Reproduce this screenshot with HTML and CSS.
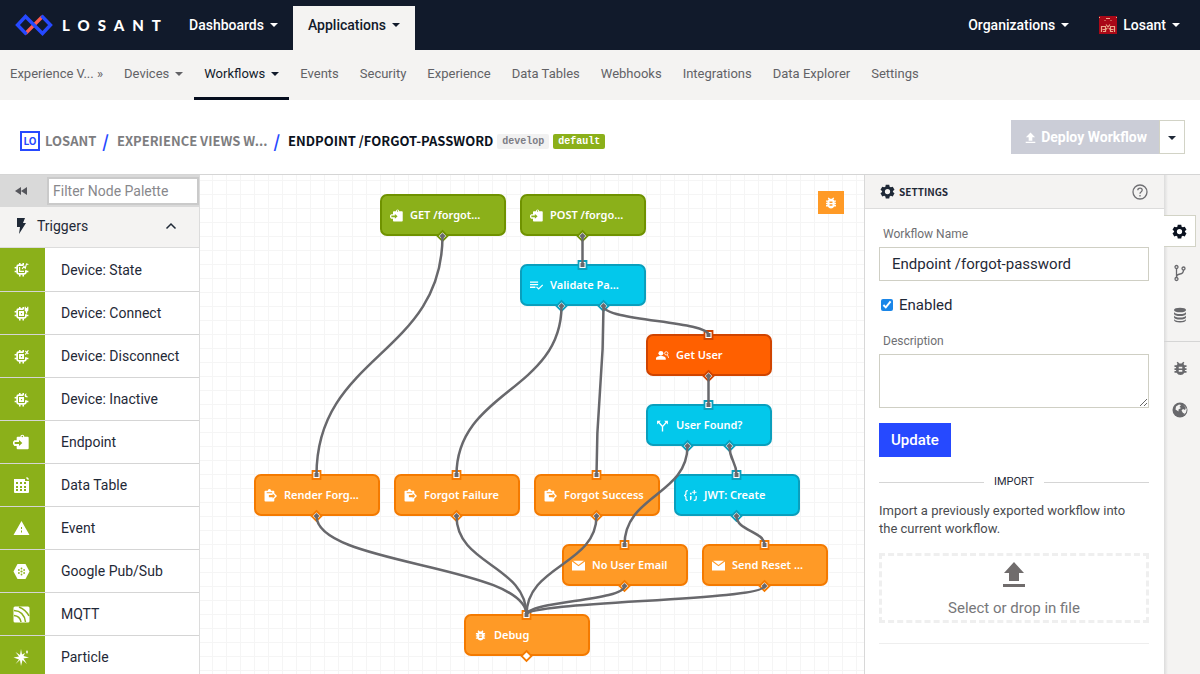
FILE: index.html
```html
<!DOCTYPE html>
<html lang="en">
<head>
<meta charset="utf-8">
<title>Endpoint /forgot-password | Losant</title>
<meta name="viewport" content="width=device-width, initial-scale=1">
<link rel="stylesheet" href="styles.css">
</head>
<body>
<svg class="defs" width="0" height="0" aria-hidden="true">
  <symbol id="gear" viewBox="0 0 24 24"><path fill-rule="evenodd" d="M9.2 1h5.6l.6 3.2 1.9 1.1 3.1-1.1 2.8 4.9-2.5 2.1v1.6l2.5 2.1-2.8 4.9-3.1-1.1-1.9 1.1-.6 3.2H9.2l-.6-3.2-1.9-1.1-3.1 1.1L.8 14.900l2.500-2.100v-1.600L.8 9.100l2.800-4.900 3.100 1.100 1.900-1.100zM12 7.800a4.200 4.200 0 1 0 0 8.400 4.200 4.200 0 0 0 0-8.400z"/></symbol>
  <symbol id="bug" viewBox="0 0 24 24"><path fill-rule="evenodd" d="M20.500 7.500h-3A6 6 0 0 0 16 5.800L17.500 4 16 2.500l-2.500 2.300h-3L8 2.500 6.500 4 8 5.800a6 6 0 0 0-1.500 1.700h-3V10h2.300v1.500H3.500V14h2.300v1.500H3.500V18h3a6.300 6.300 0 0 0 11 0h3v-2.500h-2.300V14h2.300v-2.500h-2.300V10h2.300zM14.500 16.500h-5V14h5zm0-4.500h-5V9.500h5z"/></symbol>
  <symbol id="mail" viewBox="0 0 24 24"><path d="M2 3h20l-10 8z M0 4.500l12 9 12-9V21H0z"/></symbol>
  <symbol id="endpoint" viewBox="0 0 24 24"><path fill-rule="evenodd" d="M7 4h4a3 3 0 0 1 6 0h5q1.500 0 1.500 1.500v16Q23.500 23 22 23H7q-1.500 0-1.500-1.500V18H2L0 15v-3l2-2.500h3.500v-4Q5.500 4 7 4zM14 2.500a1.200 1.200 0 1 0 0 2.400 1.200 1.200 0 0 0 0-2.400zM2.500 12v3H9v3l5-4.500L9 9v3z"/></symbol>
  <symbol id="reply" viewBox="0 0 24 24"><path fill-rule="evenodd" d="M2.500 3H7a3 3 0 0 1 6 0h4.500Q19 3 19 4.500V8l5 5-5 5v3.500q0 1.500-1.500 1.500h-15Q1 23 1 21.500v-17Q1 3 2.500 3zM5 6v2h10V6zM16 8.500V11H9v4h7v2.500l4.500-4.500z"/></symbol>
  <symbol id="upload" viewBox="0 0 24 24"><path d="M12 1 22 11.500h-6V19H8v-7.500H2zM1.500 21.500h21V24h-21z"/></symbol>
  <symbol id="validate" viewBox="0 0 24 24"><path d="M0 4.500h15V7H0zm0 4.800h15v2.400H0zM0 14h10v2.400H0z"/><path d="m12 14.500 4 4L23.500 11" fill="none" stroke="currentColor" stroke-width="2.200"/></symbol>
  <symbol id="user" viewBox="0 0 24 24"><circle cx="9" cy="8" r="4.500"/><path d="M0 20v-2.500C0 14 6 13 9 13s9 1 9 4.500V20z"/><circle cx="19" cy="8" r="3" fill="none" stroke="currentColor" stroke-width="1.500"/><path d="m21 10.500 2.500 6" stroke="currentColor" stroke-width="1.500"/></symbol>
  <symbol id="split" viewBox="0 0 24 24"><path d="M12 23v-9L4.500 5.500M12 14l7.500-8.500" fill="none" stroke="currentColor" stroke-width="2.500"/><path d="M2 3h7L2 10zM22 3h-7l7 7z"/></symbol>
  <symbol id="jwt" viewBox="0 0 24 24"><path d="M7 3H6Q3.500 3 3.500 6v3.500L1 12l2.500 2.500V18q0 3 2.500 3h1M22.500 13v5q0 3-3 3H18" fill="none" stroke="currentColor" stroke-width="2.200"/><path d="M11 7h3v3h-3zM11 13h3v6l-3 2zM18 2h2v3h3v2h-3v3h-2V7h-3V5h3z"/></symbol>
  <symbol id="chip" viewBox="0 0 24 24"><path d="M15 5H7.500Q5 5 5 7.500v9Q5 19 7.500 19h9q2.500 0 2.500-2.500V13" fill="none" stroke="currentColor" stroke-width="2.800"/><path d="M8 1.500h2.500V5H8zM13.500 1.500H16V5h-2.500zM8 19.500h2.500V23H8zM13.500 19.500H16V23h-2.500zM1 8h3.500v2.500H1zM1 14h3.500v2.500H1zM19 14h4v2.500h-4z"/></symbol>
  <symbol id="core" viewBox="0 0 24 24"><path fill-rule="evenodd" d="M8 8h8v8H8zm3 3v2h2v-2z"/></symbol>
</svg>

<header class="topbar">
  <a class="brand" href="#" aria-label="Losant">
    <svg width="38" height="22" viewBox="0 0 38 22" fill="none" stroke-width="3.400"><path stroke="#ff5a4e" d="m10.500 19.500 17-17"/><path stroke="#2649ff" d="m11.500 20.300-9-9.300 8-8.500 17 17 8-8.500-9-9.300"/></svg>
    <span class="wordmark">LOSANT</span>
  </a>
  <nav class="main-nav">
    <a class="main-link" href="#">Dashboards<i class="caret"></i></a>
    <a class="main-link main-link-active" href="#">Applications<i class="caret"></i></a>
  </nav>
  <nav class="account-nav">
    <a class="main-link" href="#">Organizations<i class="caret"></i></a>
    <a class="main-link account" href="#">
      <svg width="18" height="18" viewBox="0 0 18 18"><path fill="#a90817" d="M0 0h18v18H0z"/><path d="M0 1.500h1M17 1.500h1M7 2.500h4M5.500 4.500h1m5 0h1M2.500 16v-5.500h4v3h-3M6.500 13.500v2H4M15.500 16v-5.500h-4v3h3M11.500 13.500v2H14M7 8.500l4 5M11 8.500l-4 5" fill="none" stroke="#eaa98a" stroke-width="1.200"/></svg>
      Losant<i class="caret"></i></a>
  </nav>
</header>

<nav class="subnav">
  <a class="sub-link" href="#">Experience V... »</a>
  <a class="sub-link" href="#">Devices<i class="caret"></i></a>
  <a class="sub-link sub-link-active" href="#">Workflows<i class="caret"></i></a>
  <a class="sub-link" href="#">Events</a>
  <a class="sub-link" href="#">Security</a>
  <a class="sub-link" href="#">Experience</a>
  <a class="sub-link" href="#">Data Tables</a>
  <a class="sub-link" href="#">Webhooks</a>
  <a class="sub-link" href="#">Integrations</a>
  <a class="sub-link" href="#">Data Explorer</a>
  <a class="sub-link" href="#">Settings</a>
</nav>

<div class="titlebar">
  <div class="crumbs">
    <span class="org-badge">LO</span>
    <a class="crumb" href="#">LOSANT</a><span class="slash">/</span>
    <a class="crumb" href="#">EXPERIENCE VIEWS W...</a><span class="slash">/</span>
    <h1 class="crumb-current">ENDPOINT /FORGOT-PASSWORD</h1>
    <span class="tag">develop</span><span class="tag tag-default">default</span>
  </div>
  <div class="deploy">
    <button class="deploy-main" type="button" disabled><svg width="11" height="11"><use href="#upload"/></svg>Deploy Workflow</button>
    <button class="deploy-more" type="button" aria-label="Deploy options"><i class="caret"></i></button>
  </div>
</div>

<main class="workspace">
  <aside class="palette">
    <div class="palette-filter">
      <button class="collapse" type="button" aria-label="Collapse palette"><svg width="14" height="10" viewBox="0 0 14 10"><path d="M7 1v8L1 5zM13 1v8L7 5z"/></svg></button>
      <input class="filter-input" type="text" placeholder="Filter Node Palette" aria-label="Filter Node Palette">
    </div>
    <button class="group" type="button">
      <svg width="12" height="16" viewBox="0 0 12 16"><path d="M2 0h8L8 5h3L4 16l1-7H2z"/></svg>Triggers
      <svg class="chevron" width="12" height="8" viewBox="0 0 12 8"><path d="m1.500 6.500 4.500-4.500 4.500 4.500" fill="none" stroke="currentColor" stroke-width="1.500"/></svg>
    </button>
    <ul class="node-list">
      <li class="node-type"><span class="node-icon"><svg width="15" height="15" viewBox="0 0 24 24"><use href="#chip"/><path d="M9 8v7h7M13 11l3-4 2 3 2-7 3 1" fill="none" stroke="currentColor" stroke-width="1.800"/></svg></span>Device: State</li>
      <li class="node-type"><span class="node-icon"><svg width="15" height="15" viewBox="0 0 24 24"><use href="#chip"/><use href="#core"/><path d="M17 1h2v2h2V1h2v6l-2 2v3h-2V9l-2-2z"/></svg></span>Device: Connect</li>
      <li class="node-type"><span class="node-icon"><svg width="15" height="15" viewBox="0 0 24 24"><use href="#chip"/><use href="#core"/><path d="m18 3 5 5M23 2l-5 7" stroke="currentColor" stroke-width="1.800"/></svg></span>Device: Disconnect</li>
      <li class="node-type"><span class="node-icon"><svg width="15" height="15" viewBox="0 0 24 24"><use href="#chip"/><use href="#core"/><path d="M20 2q-2 4 3 6-6 2-6-3 0-2 3-3z"/></svg></span>Device: Inactive</li>
      <li class="node-type"><span class="node-icon"><svg width="16" height="16"><use href="#endpoint"/></svg></span>Endpoint</li>
      <li class="node-type"><span class="node-icon"><svg width="17" height="17" viewBox="0 0 17 17"><path fill-rule="evenodd" d="M1 2h11v2h4v11q0 1-1 1H2q-1 0-1-1zM3 5v2h2V5zm4 0v2h2V5zm4 0v2h2V5zM3 9v2h2V9zm4 0v2h2V9zm4 0v2h2V9zm-8 3v2h2v-2zm4 0v2h2v-2zm4 0v2h2v-2zM14 0l2 2-1 1-2-2z"/></svg></span>Data Table</li>
      <li class="node-type"><span class="node-icon"><svg width="17" height="17" viewBox="0 0 17 17"><path fill-rule="evenodd" d="m8.500 1 8 14H.5zM8 7v2h1V7zm0 3.500v2h1v-2z"/></svg></span>Event</li>
      <li class="node-type"><span class="node-icon"><svg width="17" height="17" viewBox="0 0 17 17"><path d="M4.500 1h8l4 7.500-4 7.500h-8l-4-7.500z"/><g fill="#8eb31c"><circle cx="8.500" cy="8.500" r="1.100"/><circle cx="8.500" cy="5.500" r=".9"/><circle cx="8.500" cy="11.500" r=".9"/><circle cx="5.900" cy="7" r=".9"/><circle cx="11.100" cy="7" r=".9"/><circle cx="5.900" cy="10" r=".9"/><circle cx="11.100" cy="10" r=".9"/></g></svg></span>Google Pub/Sub</li>
      <li class="node-type"><span class="node-icon"><svg width="17" height="17" viewBox="0 0 17 17"><rect x=".5" y=".5" width="16" height="16" rx="1.500"/><path d="M1 4.500Q11 5 12.500 16M1 9.500q6 .5 7 6.500M6 1q7 3 10 9" fill="none" stroke="#8bb01a" stroke-width="1.500"/></svg></span>MQTT</li>
      <li class="node-type"><span class="node-icon"><svg width="17" height="17" viewBox="0 0 17 17"><path d="m8 0 1 5.500L12 4l-1.500 3 5.500 1.500-5.500 1L14 15l-4.500-4L8 17l-1-6-4.500 4L6 10.500.5 8.500 6 7.500 2.500 3 7 6zM14 1l1 2-1 2-1-2z"/></svg></span>Particle</li>
    </ul>
  </aside>

  <section class="canvas" aria-label="Workflow canvas">
    <div class="node node-green" style="left:180px;top:19px"><svg width="13" height="13"><use href="#endpoint"/></svg>GET /forgot...</div>
    <div class="node node-green" style="left:320px;top:19px"><svg width="13" height="13"><use href="#endpoint"/></svg>POST /forgo...</div>
    <div class="node node-blue" style="left:320px;top:89px"><svg width="13" height="13"><use href="#validate"/></svg>Validate Pa...</div>
    <div class="node node-red" style="left:446px;top:159px"><svg width="13" height="13"><use href="#user"/></svg>Get User</div>
    <div class="node node-blue" style="left:446px;top:229px"><svg width="13" height="13"><use href="#split"/></svg>User Found?</div>
    <div class="node node-orange" style="left:54px;top:299px"><svg width="13" height="13"><use href="#reply"/></svg>Render Forg...</div>
    <div class="node node-orange" style="left:194px;top:299px"><svg width="13" height="13"><use href="#reply"/></svg>Forgot Failure</div>
    <div class="node node-orange" style="left:334px;top:299px"><svg width="13" height="13"><use href="#reply"/></svg>Forgot Success</div>
    <div class="node node-blue" style="left:474px;top:299px"><svg width="13" height="13"><use href="#jwt"/></svg>JWT: Create</div>
    <div class="node node-orange" style="left:362px;top:369px"><svg width="13" height="13"><use href="#mail"/></svg>No User Email</div>
    <div class="node node-orange" style="left:502px;top:369px"><svg width="13" height="13"><use href="#mail"/></svg>Send Reset ...</div>
    <div class="node node-orange" style="left:264px;top:439px"><svg width="13" height="13"><use href="#bug"/></svg>Debug</div>
    <svg class="wires" width="664" height="500" viewBox="-.5 0 664 500">
      <defs>
        <path id="out" d="m0-5 5 5-5 5-5-5z"/>
        <path id="in" d="M-4-4h8v8h-8z"/>
      </defs>
      <g fill="#fff" stroke-width="1.800">
        <g stroke="#6f9200"><use href="#out" x="242" y="61"/><use href="#out" x="382" y="61"/></g>
        <g stroke="#0a9fbd"><use href="#in" x="382" y="90"/><use href="#out" x="361" y="131"/><use href="#out" x="403" y="131"/><use href="#in" x="508" y="230"/><use href="#out" x="487" y="271"/><use href="#out" x="529" y="271"/><use href="#in" x="536" y="300"/><use href="#out" x="536" y="341"/></g>
        <g stroke="#d04400"><use href="#in" x="508" y="160"/><use href="#out" x="508" y="201"/></g>
        <g stroke="#f47a00"><use href="#in" x="116" y="300"/><use href="#out" x="116" y="341"/><use href="#in" x="256" y="300"/><use href="#out" x="256" y="341"/><use href="#in" x="396" y="300"/><use href="#out" x="396" y="341"/><use href="#in" x="424" y="370"/><use href="#out" x="424" y="411"/><use href="#in" x="564" y="370"/><use href="#out" x="564" y="411"/><use href="#in" x="326" y="440"/><use href="#out" x="326" y="481"/></g>
      </g>
      <g fill="none" stroke="#68686c" stroke-width="2.500">
        <path d="M242 61C242 180 116 180 116 300"/>
        <path d="M382 61V90"/>
        <path d="M361 131C361 216 256 216 256 300"/>
        <path d="M403 131C403 216 396 216 396 300"/>
        <path d="M403 131C403 146 508 146 508 160"/>
        <path d="M508 201V230"/>
        <path d="M487 271C487 320 424 320 424 370"/>
        <path d="M529 271C529 286 536 286 536 300"/>
        <path d="M536 341C536 356 564 356 564 370"/>
        <path d="M116 341C116 390 326 390 326 440"/>
        <path d="M256 341C256 390 326 390 326 440"/>
        <path d="M396 341C396 390 326 390 326 440"/>
        <path d="M424 411C424 426 326 426 326 440"/>
        <path d="M564 411C564 426 326 426 326 440"/>
      </g>
      <g fill="#68686c">
        <path d="m242 58 3 3-3 3-3-3zm140 0 3 3-3 3-3-3zm-21 70 3 3-3 3-3-3zm42 0 3 3-3 3-3-3zm105 70 3 3-3 3-3-3zm-21 70 3 3-3 3-3-3zm42 0 3 3-3 3-3-3zm7 70 3 3-3 3-3-3zm-420 0 3 3-3 3-3-3zm140 0 3 3-3 3-3-3zm140 0 3 3-3 3-3-3zm28 70 3 3-3 3-3-3zm140 0 3 3-3 3-3-3z"/>
        <path d="M380 88h4v4h-4zM506 158h4v4h-4zM506 228h4v4h-4zM534 298h4v4h-4zM114 298h4v4h-4zM254 298h4v4h-4zM394 298h4v4h-4zM422 368h4v4h-4zM562 368h4v4h-4zM324 438h4v4h-4z"/>
      </g>
    </svg>
    <button class="debug-toggle" type="button" aria-label="Show debug nodes"><svg width="14" height="14"><use href="#bug"/></svg></button>
  </section>

  <aside class="panel">
    <header class="panel-head">
      <svg width="15" height="15"><use href="#gear"/></svg><h2 class="panel-title">SETTINGS</h2>
      <button class="help" type="button" aria-label="Help"><svg width="16" height="16" viewBox="0 0 16 16" fill="none" stroke="#6f6f73" stroke-width="1.300"><circle cx="8" cy="8" r="7"/><path d="M5.800 6.300q0-2.200 2.200-2.200t2.200 2q0 1-1.200 1.900Q8 8.700 8 9.800M8 11v1.400"/></svg></button>
    </header>
    <form class="panel-body">
      <label class="field-label" for="name">Workflow Name</label>
      <input class="field" id="name" type="text" value="Endpoint /forgot-password">
      <label class="check"><input class="check-box" type="checkbox" checked>Enabled</label>
      <label class="field-label" for="description">Description</label>
      <textarea class="field field-area" id="description"></textarea>
      <button class="update" type="button">Update</button>
      <h3 class="divider">IMPORT</h3>
      <p class="import-text">Import a previously exported workflow into the current workflow.</p>
      <button class="dropzone" type="button"><svg width="24" height="26" viewBox="0 0 24 26"><path d="M12 0 22 11h-5v8H7v-8H2zM1 22h22v3H1z"/></svg>Select or drop in file</button>
      <hr class="rule">
    </form>
  </aside>

  <nav class="rail" aria-label="Workflow panels">
    <button class="rail-tab rail-tab-active" type="button" aria-label="Settings"><svg width="15" height="15"><use href="#gear"/></svg></button>
    <button class="rail-tab" type="button" aria-label="Versions"><svg width="14" height="18" viewBox="0 0 14 18" fill="none" stroke="#68686c" stroke-width="1.300"><circle cx="3.500" cy="3" r="1.500"/><circle cx="3.500" cy="15" r="1.500"/><circle cx="10.500" cy="4.500" r="1.500"/><path d="M3.500 4.500v9M10.500 6q0 3.500-3.500 4t-3.500 3"/></svg></button>
    <button class="rail-tab" type="button" aria-label="Storage"><svg width="14" height="16" viewBox="0 0 14 16"><ellipse cx="7" cy="3" rx="6" ry="2.300"/><path d="M1 5q1 2 6 2t6-2v2q-1 2-6 2T1 7zM1 8.500q1 2 6 2t6-2v2q-1 2-6 2t-6-2zM1 12q1 2 6 2t6-2v1.300Q12 15.500 7 15.500t-6-2.200z"/></svg></button>
    <hr class="rail-rule">
    <button class="rail-tab" type="button" aria-label="Debug"><svg width="17" height="17"><use href="#bug"/></svg></button>
    <button class="rail-tab" type="button" aria-label="Globals"><svg width="16" height="16" viewBox="0 0 16 16"><circle cx="8" cy="8" r="7.500"/><path fill="#f4f3f2" d="M4 4.500 7 2.500l2 .5-1.500 2L9 6 6.500 7.500v2l-3-2zM11 2.500l3 3-1 2.500-2-1-1.500 1.500L11 11l1.500.500-1 1.500L14 10.500 14.800 7z"/></svg></button>
  </nav>
</main>
</body>
</html>
```

FILE: styles.css
```css
* { box-sizing: border-box; }
body {
  margin: 0;
  height: 100vh;
  display: flex;
  flex-direction: column;
  overflow: hidden;
  background: #fff;
  color: #1f2937;
  font: 14px/20px Roboto, "Noto Sans", sans-serif;
}
a { color: inherit; text-decoration: none; }
button, input, textarea { font: inherit; color: inherit; margin: 0; }
button { border: 0; padding: 0; background: none; cursor: pointer; }
svg { flex: none; }
svg:not([fill]) { fill: currentColor; }
.defs { position: absolute; }

.caret {
  border: 4px solid transparent;
  border-top-color: currentColor;
  border-bottom: 0;
  margin-left: 6px;
}

/* Top bar */
.topbar {
  flex: none;
  height: 50px;
  display: flex;
  background: #111a2b;
  color: #fff;
  font-weight: 500;
}
.brand { display: flex; align-items: center; gap: 9px; padding-left: 15px; width: 174px; }
.wordmark { font: 900 15px/20px Lato, sans-serif; letter-spacing: 8px; }
.main-nav, .account-nav { display: flex; }
.account-nav { margin-left: auto; padding-right: 5px; }
.main-link { display: flex; align-items: center; padding: 0 15px; }
.main-link-active {
  margin-top: 6px;
  padding-bottom: 6px;
  background: #f4f3f2;
  color: #111a2b;
}
.account svg { margin-right: 6px; }

/* Section navigation */
.subnav {
  flex: none;
  height: 50px;
  display: flex;
  gap: 1px;
  background: #f4f3f2;
  color: #626266;
  font-size: 13px;
}
.sub-link { display: flex; align-items: center; padding: 0 10px; border-bottom: 3px solid transparent; }
.sub-link-active { border-bottom-color: #050d1e; color: #111a2b; }

/* Title bar */
.titlebar {
  flex: none;
  height: 75px;
  display: flex;
  align-items: center;
  justify-content: space-between;
  padding: 0 15px 0 20px;
  border-bottom: 1px solid #d5d5d5;
}
.crumbs {
  display: flex;
  align-items: center;
  font: bold 13px/24px "Noto Sans CJK SC", "Noto Sans", sans-serif;
  color: #7d7d80;
  padding-top: 8px;
}
.org-badge {
  width: 20px;
  height: 20px;
  margin-right: 5px;
  border: 2px solid #2649ff;
  color: #2649ff;
  font-size: 10px;
  line-height: 16px;
  text-align: center;
}
.slash { color: #2649ff; margin: 0 8px 0 6px; font-size: 17px; }
.crumb-current { margin: 0; font: inherit; color: #0b1220; }
.tag {
  margin-left: 4px;
  padding: 0 5px;
  border-radius: 2px;
  background: #f1f1f1;
  color: #7d7d85;
  font: bold 10px/15px "Liberation Mono", monospace;
}
.tag-default { background: #8bb01a; color: #fff; }
.deploy { display: flex; height: 34px; }
.deploy-main {
  display: flex;
  align-items: center;
  gap: 5px;
  padding: 0 12px 0 14px;
  background: #cbcdd7;
  color: #fff;
  font-weight: 700;
}
.deploy-more { width: 26px; border: 1px solid #d2d3c6; }
.deploy-more .caret { display: inline-block; margin: 0; vertical-align: middle; }

/* Workspace */
.workspace { flex: 1; min-height: 0; display: flex; }

.palette { flex: none; width: 200px; overflow: hidden; border-right: 1px solid #dcdcdc; }
.palette-filter { display: flex; height: 32px; background: #d9d9d9; }
.collapse { flex: none; width: 47px; padding-right: 6px; color: #55565c; }
.filter-input {
  min-width: 0;
  width: 152px;
  margin: 2px 0;
  padding: 0 4px;
  border: 2px solid #cacaca;
  background: #fff;
}
.filter-input::placeholder { color: #88888c; opacity: 1; }
.group {
  display: flex;
  align-items: center;
  gap: 10px;
  width: 100%;
  height: 41px;
  padding: 0 22px 2px 15px;
  border-bottom: 1px solid #dcdcdc;
  background: #f4f3f2;
}
.chevron { margin-left: auto; }
.node-list { list-style: none; margin: 0; padding: 0; }
.node-type {
  display: flex;
  align-items: center;
  gap: 16px;
  height: 43px;
  border-bottom: 1px solid #d5d5d5;
  line-height: 22px;
}
.node-type:first-child { height: 44px; }
.node-icon {
  display: flex;
  align-items: center;
  justify-content: center;
  width: 45px;
  height: 100%;
  padding-right: 3px;
  background: #8bb01a;
  color: #fff;
}

/* Canvas */
.canvas {
  position: relative;
  flex: 1;
  min-width: 0;
  overflow: hidden;
  background:
    linear-gradient(90deg, #f5f5f5 1px, transparent 1px) 12px 5px / 14px 14px,
    linear-gradient(#f5f5f5 1px, transparent 1px) 12px 5px / 14px 14px;
}
.node {
  position: absolute;
  display: flex;
  align-items: center;
  gap: 7px;
  width: 126px;
  height: 42px;
  padding: 0 8px;
  border: 2px solid;
  border-radius: 7px;
  color: #fff;
  font: 600 11px/16px "Noto Sans", sans-serif;
  white-space: nowrap;
}
.node-green { background: #8bb01a; border-color: #6f9200; }
.node-blue { background: #03c8eb; border-color: #0a9fbd; }
.node-red { background: #ff6000; border-color: #d04400; }
.node-orange { background: #ff9a26; border-color: #f47a00; }
.wires { position: absolute; left: 0; top: 0; pointer-events: none; }
.debug-toggle {
  position: absolute;
  right: 20px;
  top: 16px;
  display: flex;
  align-items: center;
  justify-content: center;
  width: 26px;
  height: 23px;
  background: #ff9a26;
  color: #fff;
}

/* Settings panel */
.panel { flex: none; width: 300px; border-left: 1px solid #d8d8d8; background: #fff; font-size: 15px; }
.panel-head {
  display: flex;
  align-items: center;
  gap: 4px;
  height: 34px;
  padding: 0 16px 0 15px;
  border-bottom: 1px solid #dcdcdc;
  background: #f4f3f2;
}
.panel-title { margin: 0; font: bold 10px/16px "Noto Sans CJK SC", "Noto Sans", sans-serif; }
.help { display: flex; margin-left: auto; }
.panel-body { display: flex; flex-direction: column; padding: 16px 15px 0 14px; }
.field-label { padding-left: 4px; font-size: 12px; line-height: 18px; color: #6f6f73; margin-bottom: 4px; }
.field { width: 100%; height: 34px; padding: 0 12px; border: 1px solid #cfcfc4; background: #fff; }
.field-area { display: block; height: 54px; resize: vertical; }
.check { display: flex; align-items: center; gap: 6px; margin: 14px 0 17px; }
.check-box { width: 12px; height: 12px; margin: 0 0 0 2px; accent-color: #1a86e8; }
.update {
  align-self: flex-start;
  height: 34px;
  margin-top: 15px;
  padding: 0 12px;
  background: #2649ff;
  color: #fff;
  font-weight: 500;
}
.divider {
  display: flex;
  align-items: center;
  gap: 10px;
  margin: 16px 0 11px;
  font-size: 11px;
  line-height: 18px;
  font-weight: 400;
}
.divider::before, .divider::after { content: ""; flex: 1; height: 1px; background: #d5d5d5; }
.import-text { margin: 0; padding-right: 12px; font-size: 13px; line-height: 18px; color: #4a4c50; }
.dropzone {
  display: flex;
  flex-direction: column;
  align-items: center;
  justify-content: center;
  gap: 10px;
  height: 70px;
  margin-top: 15px;
  padding-top: 4px;
  border: 3px dashed #efefef;
  color: #77777a;
}
.dropzone svg { color: #706c6c; }
.rule { width: 100%; margin: 20px 0 0; border: 0; border-top: 1px solid #eee; }

/* Panel rail */
.rail {
  flex: none;
  width: 36px;
  padding-top: 40px;
  background: linear-gradient(90deg, #dcdcdc, #f4f3f2 4px);
  color: #68686c;
}
.rail-tab { display: flex; align-items: center; justify-content: center; width: 32px; height: 42px; }
.rail-tab-active {
  height: 32px;
  margin-bottom: 5px;
  border: 1px solid #d2d3c6;
  border-left: 0;
  background: #fff;
  color: #0b1220;
}
.rail-rule { margin: 5px 0; border: 0; border-top: 1px solid #d5d5d5; }
```
